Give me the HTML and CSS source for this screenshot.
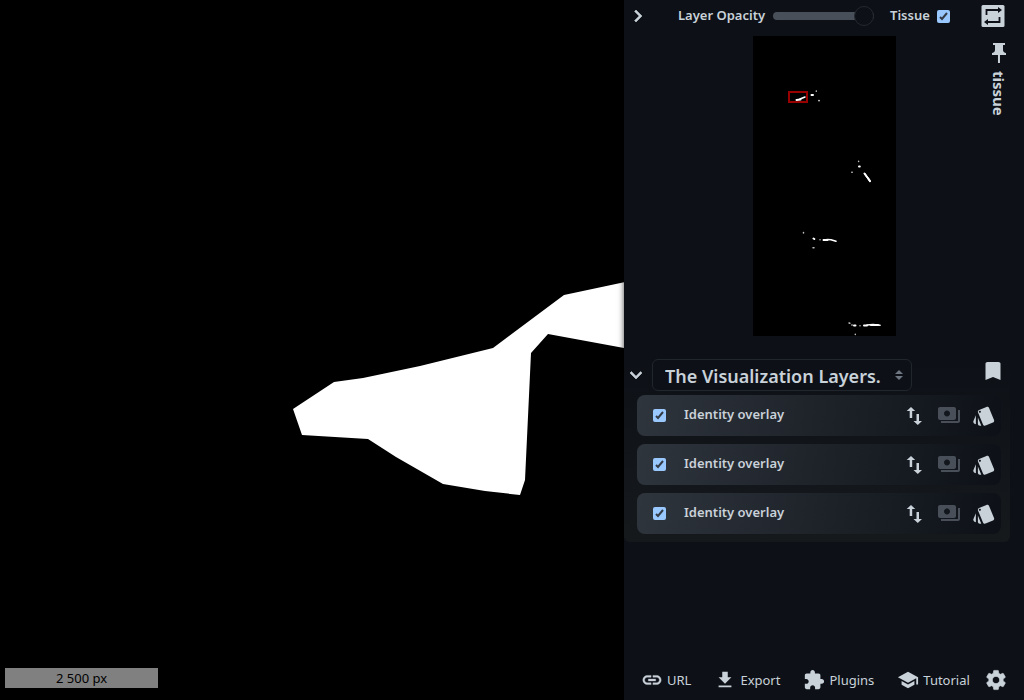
FILE: index.html
```html
<!DOCTYPE html>
<html lang="en">
<head>
<meta charset="utf-8">
<title>Slide viewer</title>
<link rel="stylesheet" href="styles.css">
</head>
<body>
<main class="viewer">
  <svg class="slide" width="1024" height="700" viewBox="0 0 1024 700" aria-hidden="true">
    <polygon fill="#fff" points="293,409 334,382 363,378 420,366 493,348 564,295 640,279 640,351 548,334 531,353 525,480 520,495 485,491 443,484 396,457 368,439 302,435"/>
  </svg>
  <div class="scalebar">2 500 px</div>
</main>
<aside class="sidebar">
  <header class="toolbar">
    <button class="icon-btn" aria-label="Collapse panel"><svg class="icon" viewBox="0 0 24 24"><path d="M10 6L8.590 7.410 13.170 12l-4.580 4.590L10 18l6-6z" stroke="currentColor" stroke-width=".6"/></svg></button>
    <label class="label opacity-label" for="opacity">Layer Opacity</label>
    <input class="slider" id="opacity" type="range" min="0" max="100" value="100">
    <label class="label tissue-label" for="tissue">Tissue</label>
    <input class="check" id="tissue" type="checkbox" checked>
    <button class="icon-btn repeat" aria-label="Clone viewer"><svg class="icon" viewBox="0 0 24 24"><rect x="0.500" y="1" width="23" height="22" rx="1.500"/><path d="M5.500 11V6H18M18.500 13v5H6" fill="none" stroke="#0d1117" stroke-width="1.800"/><path d="M17 3l4 3-4 3zM7 15l-4 3 4 3z" fill="#0d1117"/></svg></button>
  </header>
  <section class="overview">
    <svg class="minimap" width="143" height="300" viewBox="0 0 143 300" role="img" aria-label="Slide overview">
      <rect width="143" height="300"/>
      <g fill="none" stroke="#fff" stroke-linecap="round" stroke-linejoin="round">
        <path stroke-width="2" d="M43.500 64l4-.5M58.500 59h1.500M106 130.500h.8M111.500 137.500l2.500 3.500M115 142l2 3M60.500 202.500l.8.5M70.500 204h4M101 289.500h1.500M111 289.500h3M118 289h7"/>
        <path stroke-width="1.500" d="M47 63l5-2M66 64.500v.3M112 138l5 7.500M74 203.500l4 .3 5 1.500M114 289l6-.5 7 .8"/>
        <path stroke-width="1.500" stroke="#bbb" d="M63.300 55v.3M105.600 125.300v.1M98.800 136.300h.4M50.500 196.500v.5M60 211.800h1M67 203.700v.1M96 287l.8.3M98.800 289h.4M107 289.700v.1M102.300 298.300v.3"/>
      </g>
      <rect x="36" y="56" width="18" height="10" fill="none" stroke="#900" stroke-width="2"/>
    </svg>
    <div class="tab">
      <svg class="icon" viewBox="0 0 24 24"><path d="M16 9V4h2V2H6v2h2v5c0 1.660-1.340 3-3 3v2h5.970v8h2v-8H19v-2c-1.660 0-3-1.340-3-3z"/></svg>
      <span class="tab-text">tissue</span>
    </div>
  </section>
  <section class="layers">
    <div class="layers-head">
      <button class="icon-btn" aria-label="Collapse layers"><svg class="icon" viewBox="0 0 24 24"><path d="M16.590 8.590L12 13.170 7.410 8.590 6 10l6 6 6-6z" stroke="currentColor" stroke-width=".6"/></svg></button>
      <div class="select-box">
        <select class="select" aria-label="Visualization"><option>The Visualization Layers.</option></select>
        <svg class="arrows" width="8" height="10" viewBox="0 0 8 10"><path d="M0 4l4-4 4 4zM0 6h8l-4 4z"/></svg>
      </div>
      <button class="icon-btn bookmark" aria-label="Bookmark"><svg class="icon" viewBox="0 0 24 24"><path d="M17.500 3h-11Q4.500 3 4.500 4.500V21l7.500-3 7.500 3V4.500Q19.500 3 17.500 3z"/></svg></button>
    </div>
    <ul class="rows" id="rows"></ul>
  </section>
  <footer class="footer">
    <button class="action"><svg class="icon" viewBox="0 0 24 24"><path d="M3.900 12c0-1.710 1.390-3.100 3.100-3.100h4V7H7c-2.760 0-5 2.240-5 5s2.240 5 5 5h4v-1.900H7c-1.710 0-3.100-1.390-3.100-3.100zM8 13h8v-2H8v2zm9-6h-4v1.900h4c1.710 0 3.100 1.390 3.100 3.100s-1.390 3.100-3.100 3.100h-4V17h4c2.760 0 5-2.240 5-5s-2.240-5-5-5z" stroke="currentColor" stroke-width=".4"/></svg>URL</button>
    <button class="action"><svg class="icon" viewBox="0 0 24 24"><path d="M19 9h-4V3H9v6H5l7 7 7-7zM5 18v2h14v-2H5z"/></svg>Export</button>
    <button class="action"><svg class="icon" viewBox="0 0 24 24"><path d="M20.500 11H19V7c0-1.100-.9-2-2-2h-4V3.500C13 2.120 11.880 1 10.500 1S8 2.120 8 3.500V5H4c-1.100 0-1.990.9-1.990 2v3.800H3.500c1.490 0 2.700 1.210 2.700 2.700s-1.210 2.700-2.700 2.700H2V20c0 1.100.9 2 2 2h3.800v-1.500c0-1.490 1.210-2.700 2.700-2.700 1.490 0 2.700 1.210 2.700 2.700V22H17c1.100 0 2-.9 2-2v-4h1.500c1.380 0 2.500-1.120 2.500-2.500S21.880 11 20.500 11z"/></svg>Plugins</button>
    <button class="action"><svg class="icon" viewBox="0 0 24 24"><path d="M5 13.180v4L12 21l7-3.820v-4L12 17l-7-3.820zM12 3L1 9l11 6 9-4.910V17h2V9L12 3z"/></svg>Tutorial</button>
    <button class="icon-btn settings" aria-label="Settings"><svg class="icon" viewBox="0 0 24 24"><path d="M19.140 12.940c.04-.3.06-.61.06-.94 0-.32-.02-.64-.07-.94l2.030-1.580c.18-.14.23-.41.12-.61l-1.920-3.320c-.12-.22-.37-.29-.59-.22l-2.390.96c-.5-.38-1.030-.7-1.620-.94l-.36-2.540c-.04-.24-.24-.41-.48-.41h-3.840c-.24 0-.43.17-.47.41l-.36 2.540c-.59.24-1.130.57-1.620.94l-2.390-.96c-.22-.08-.47 0-.59.22L2.740 8.870c-.12.21-.08.47.12.61l2.030 1.580c-.05.3-.09.63-.09.94s.02.64.07.94l-2.030 1.580c-.18.14-.23.41-.12.61l1.920 3.320c.12.22.37.29.59.22l2.390-.96c.5.38 1.030.7 1.620.94l.36 2.540c.05.24.24.41.48.41h3.840c.24 0 .44-.17.47-.41l.36-2.540c.59-.24 1.130-.56 1.620-.94l2.390.96c.22.08.47 0 .59-.22l1.920-3.320c.12-.22.07-.47-.12-.61l-2.010-1.580zM12 15.600c-1.980 0-3.600-1.620-3.600-3.600s1.620-3.600 3.600-3.600 3.600 1.620 3.600 3.600-1.620 3.600-3.600 3.600z" stroke="currentColor" stroke-width=".6"/></svg></button>
  </footer>
</aside>
<template id="row">
  <li class="row">
    <label class="row-name"><input class="check" type="checkbox" checked><span class="row-text">Identity overlay</span></label>
    <button class="icon-btn" aria-label="Reorder"><svg class="icon" viewBox="0 0 24 24"><path d="M17 17.010V10h-2.500v7.010h-3L15.750 21l4.250-3.990h-3zM9 3L4.700 7h3v7h2.500V7h3L9 3z"/></svg></button>
    <button class="icon-btn dim" aria-label="Cache"><svg class="icon" viewBox="0 0 24 24"><path d="M19 14V5c0-1.100-.9-2-2-2H3c-1.100 0-2 .9-2 2v9c0 1.100.9 2 2 2h14c1.100 0 2-.9 2-2zm-9-1.500c-1.660 0-3-1.340-3-3s1.340-3 3-3 3 1.340 3 3-1.340 3-3 3zM23 6v11c0 1.100-.9 2-2 2H4v-2h17V6h2z"/></svg></button>
    <button class="icon-btn" aria-label="Style"><svg class="icon" viewBox="0 0 24 24"><path d="M2.530 19.650l1.340.56v-9.030l-2.430 5.860c-.41 1.020.08 2.190 1.090 2.610zm19.500-3.700L17.070 3.980c-.31-.75-1.040-1.210-1.810-1.230-.26 0-.53.04-.79.15L7.100 5.950c-.75.31-1.210 1.030-1.230 1.800-.01.27.04.54.15.8l4.960 11.970c.31.76 1.050 1.220 1.830 1.230.26 0 .52-.05.77-.15l7.360-3.050c1.020-.42 1.510-1.590 1.090-2.600zM7.880 8.750c-.55 0-1-.45-1-1s.45-1 1-1 1 .45 1 1-.45 1-1 1zm-2 11c0 1.100.9 2 2 2h1.450l-3.450-8.340v6.340z"/></svg></button>
  </li>
</template>
<script src="app.js"></script>
</body>
</html>
```
FILE: styles.css
```css
* { box-sizing: border-box; }
body {
  margin: 0;
  min-height: 100vh;
  display: flex;
  background: #000;
  color: #c9d1d9;
  font: 13px/20px "Noto Sans", sans-serif;
}
button, select, input { font: inherit; color: inherit; margin: 0; }
.icon { display: block; width: 24px; height: 24px; fill: currentColor; flex: none; }
.icon-btn { display: block; padding: 0; border: 0; background: none; flex: none; }
.viewer {
  flex: 1;
  position: relative;
  overflow: hidden;
  display: flex;
  align-items: flex-end;
  padding: 12px 5px;
}
.slide { position: absolute; left: 0; top: 0; }
.scalebar {
  position: relative;
  width: 153px;
  height: 20px;
  background: #808080;
  color: #000;
  text-align: center;
}
.sidebar {
  position: relative;
  width: 400px;
  display: flex;
  flex-direction: column;
  background: #0d1117;
  box-shadow: 0 0 6px rgba(0, 0, 0, .7);
}
.toolbar { display: flex; align-items: center; height: 32px; padding: 0 19px 0 2px; }
.label, .row-name { font-weight: 600; }
.label { padding-bottom: 2px; }
.opacity-label { margin-left: 28px; }
.slider {
  appearance: none;
  width: 101px;
  height: 20px;
  margin-left: 8px;
  background: none;
}
.slider::-webkit-slider-runnable-track { height: 8px; border-radius: 4px; background: #484f58; }
.slider::-webkit-slider-thumb {
  appearance: none;
  width: 20px;
  height: 20px;
  margin-top: -6px;
  border: 1px solid #24292f;
  border-radius: 50%;
  background: #0d1117;
}
.tissue-label { margin-left: 16px; }
.check {
  appearance: none;
  width: 13px;
  height: 13px;
  flex: none;
  border-radius: 2px;
  background: #99c8ff url("data:image/svg+xml,%3Csvg xmlns='http://www.w3.org/2000/svg' viewBox='0 0 13 13'%3E%3Cpath d='M3 7l2 2 5-6' fill='none' stroke='%23333b45' stroke-width='2'/%3E%3C/svg%3E");
}
.tissue-label + .check { margin-left: 7px; }
.repeat { margin-left: auto; }
.overview {
  display: grid;
  grid-template-columns: 1fr auto 1fr;
  padding-top: 4px;
}
.minimap { grid-column: 2; display: block; }
.tab {
  justify-self: end;
  display: flex;
  flex-direction: column;
  align-items: center;
  gap: 6px;
  padding: 5px 13px 0 0;
}
.tab-text { writing-mode: vertical-rl; font-size: 15px; font-weight: 700; }
.layers {
  margin: 23px 14px 0 0;
  padding-bottom: 8px;
  border-radius: 0 0 6px 6px;
  background: linear-gradient(#0d1117, #16191c);
}
.layers-head { display: flex; align-items: center; height: 32px; }
.select-box {
  position: relative;
  width: 260px;
  margin-left: 4px;
}
.select {
  appearance: none;
  display: block;
  width: 100%;
  height: 32px;
  padding: 2px 18px 0 12px;
  border: 1px solid #21262d;
  border-radius: 6px;
  background: #0d1117;
  font-size: 18px;
  font-weight: 600;
  line-height: 24px;
}
.arrows { position: absolute; right: 9px; top: 11px; fill: #6e7681; }
.bookmark { margin: 0 5px 8px auto; }
.rows {
  display: flex;
  flex-direction: column;
  gap: 8px;
  margin: 0;
  padding: 4px 9px 0 13px;
  list-style: none;
}
.row {
  display: flex;
  align-items: center;
  gap: 11px;
  height: 41px;
  padding: 0 5px 0 16px;
  border-radius: 8px;
  background: linear-gradient(100deg, #2f353d, #0d1117);
}
.row-name { display: flex; align-items: center; gap: 18px; flex: 1; }
.row-text { padding-bottom: 3px; }
.dim { color: #484f58; }
.footer {
  display: flex;
  align-items: center;
  gap: 14px;
  margin-top: auto;
  padding: 0 16px 8px 17px;
}
.action {
  display: flex;
  align-items: center;
  gap: 4px;
  padding: 0;
  border: 0;
  background: none;
}
.action + .action { margin-left: 9px; }
.action .icon { width: 22px; height: 22px; }
.settings { margin-left: auto; }
```
FILE: app.js
```js
const rows = document.getElementById("rows");
const row = document.getElementById("row");
for (let i = 0; i < 3; i++) rows.append(row.content.cloneNode(true));
```
